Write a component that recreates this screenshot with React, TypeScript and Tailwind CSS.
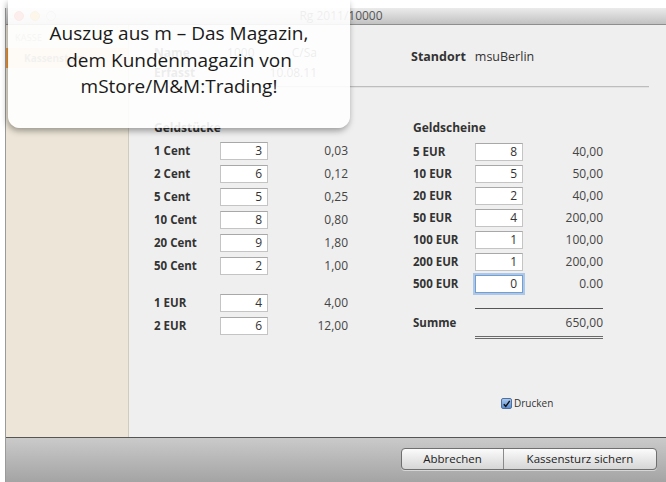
import React from 'react';

type Row = { label: string; count: string; sum: string; focus?: boolean };

const coins: Row[] = [
  { label: '1 Cent', count: '3', sum: '0,03' },
  { label: '2 Cent', count: '6', sum: '0,12' },
  { label: '5 Cent', count: '5', sum: '0,25' },
  { label: '10 Cent', count: '8', sum: '0,80' },
  { label: '20 Cent', count: '9', sum: '1,80' },
  { label: '50 Cent', count: '2', sum: '1,00' },
];

const euroCoins: Row[] = [
  { label: '1 EUR', count: '4', sum: '4,00' },
  { label: '2 EUR', count: '6', sum: '12,00' },
];

const notes: Row[] = [
  { label: '5 EUR', count: '8', sum: '40,00' },
  { label: '10 EUR', count: '5', sum: '50,00' },
  { label: '20 EUR', count: '2', sum: '40,00' },
  { label: '50 EUR', count: '4', sum: '200,00' },
  { label: '100 EUR', count: '1', sum: '100,00' },
  { label: '200 EUR', count: '1', sum: '200,00' },
  { label: '500 EUR', count: '0', sum: '0.00', focus: true },
];

function CountInput({ value, focus }: { value: string; focus?: boolean }) {
  return (
    <div
      className={
        focus
          ? 'h-[18px] w-[48px] bg-white border border-[#6f9fd6] shadow-[0_0_0_2px_rgba(120,165,220,0.55)] text-right pr-[5px] leading-[16px] text-[12px] text-[#333]'
          : 'h-[18px] w-[48px] bg-white border border-[#c4c4c4] border-t-[#a8a8a8] text-right pr-[5px] leading-[16px] text-[12px] text-[#333]'
      }
    >
      {value}
    </div>
  );
}

function MoneyRow({ row, labelWidth, height }: { row: Row; labelWidth: string; height: string }) {
  return (
    <div className={`flex items-center ${height}`}>
      <div className={`${labelWidth} text-[11.5px] font-bold text-[#333]`}>{row.label}</div>
      <CountInput value={row.count} focus={row.focus} />
      <div className="w-[80px] text-right text-[12px] text-[#444]">{row.sum}</div>
    </div>
  );
}

function TrafficLights() {
  return (
    <div className="flex items-center gap-[6px] pl-[8px]">
      <span className="h-[10px] w-[10px] rounded-full bg-[#e2574c] border border-[#c0392b]" />
      <span className="h-[10px] w-[10px] rounded-full bg-[#e9b33a] border border-[#c8922a]" />
      <span className="h-[10px] w-[10px] rounded-full bg-[#d8d8d8] border border-[#a9a9a9]" />
    </div>
  );
}

export default function App() {
  return (
    <div className="relative h-[482px] w-[666px] overflow-hidden bg-white pt-[8px] pl-[5px] font-['Open_Sans','Liberation_Sans',sans-serif] text-[11px]">
      <div className="flex h-[474px] flex-col border-l border-[#9a9a9a]">
        {/* title bar */}
        <div className="relative flex h-[17px] items-center bg-gradient-to-b from-[#ebebeb] to-[#c2c2c2] border-b border-[#8e8e8e]">
          <TrafficLights />
          <div className="flex-1 text-center text-[12px] leading-[16px] text-[#555] pr-[40px]">Rg 2011/10000</div>
        </div>

        <div className="flex flex-1">
          {/* sidebar */}
          <div className="w-[123px] bg-[#ede6d8] border-r border-[#d2cbbd]">
            <div className="pl-[9px] pt-[6px] h-[23px] text-[9px] tracking-wide text-[#9b9b9b]">KASSE</div>
            <div className="flex h-[20px] items-center border-l-[3px] border-[#ef9a3c] bg-[#f6cfa2] pl-[15px] text-[10px] font-bold text-[#7d7466]">
              Kassensturz
            </div>
          </div>

          {/* main form */}
          <div className="flex-1 bg-[#efefef] px-[12px]">
            <div className="flex pt-[18px] pl-[13px]">
              <div className="w-[257px] text-[12px]">
                <div className="flex h-[20px] w-[163px] items-center justify-between text-[#444]">
                  <span className="font-bold">Name</span>
                  <span>1000</span>
                  <span>C/Sa</span>
                </div>
                <div className="flex h-[20px] w-[163px] items-center justify-between text-[#444]">
                  <span className="font-bold">Erfasst</span>
                  <span>10.08.11</span>
                </div>
              </div>
              <div className="flex h-[28px] items-center gap-[9px] text-[12.5px] text-[#333]">
                <span className="font-bold">Standort</span>
                <span>msuBerlin</span>
              </div>
            </div>

            <div className="mt-[3px] h-[2px] w-[508px] border-t border-[#bdbdbd] bg-[#e2e2e2]" />

            <div className="flex pt-[28px] pl-[13px]">
              {/* coins */}
              <div className="w-[259px]">
                <div className="flex h-[23px] items-center text-[12px] font-bold text-[#333]">Geldstücke</div>
                {coins.map((r) => (
                  <MoneyRow key={r.label} row={r} labelWidth="w-[66px]" height="h-[23px]" />
                ))}
                <div className="mt-[14px]">
                  {euroCoins.map((r) => (
                    <MoneyRow key={r.label} row={r} labelWidth="w-[66px]" height="h-[23px]" />
                  ))}
                </div>
              </div>

              {/* notes */}
              <div>
                <div className="flex h-[23px] items-center text-[12px] font-bold text-[#333]">Geldscheine</div>
                <div className="mt-[2px]">
                  {notes.map((r) => (
                    <MoneyRow key={r.label} row={r} labelWidth="w-[62px]" height="h-[22px]" />
                  ))}
                </div>
                <div className="ml-[62px] mt-[13px] h-px w-[128px] bg-[#555]" />
                <div className="flex h-[27px] items-center">
                  <div className="w-[110px] text-[11.5px] font-bold text-[#333]">Summe</div>
                  <div className="w-[80px] text-right text-[12px] text-[#444]">650,00</div>
                </div>
                <div className="ml-[62px] h-[3px] w-[128px] border-y border-[#6a6a6a]" />

                <div className="mt-[57px] ml-[88px] flex items-center gap-[2px] text-[10px] text-[#333]">
                  <span className="flex h-[11px] w-[11px] items-center justify-center rounded-[2px] border border-[#4f6f9c] bg-gradient-to-b from-[#a9c8ee] to-[#5d8fd2]">
                    <svg viewBox="0 0 10 10" className="h-[10px] w-[10px]">
                      <path d="M2 5.2 L4.2 7.6 L8.6 1.6" fill="none" stroke="#111" strokeWidth="1.6" />
                    </svg>
                  </span>
                  <span>Drucken</span>
                </div>
              </div>
            </div>
          </div>
        </div>

        {/* bottom bar */}
        <div className="flex h-[45px] items-center justify-end border-t border-[#555] bg-gradient-to-b from-[#cacaca] to-[#a4a4a4] pr-[9px] pb-[2px]">
          <div className="flex h-[22px] overflow-hidden rounded-[4px] border border-[#6f6f6f] bg-gradient-to-b from-[#fbfbfb] to-[#d6d6d6] text-[11.5px] text-[#222] shadow-[0_1px_0_rgba(255,255,255,0.5)]">
            <div className="flex w-[102px] items-center justify-center border-r border-[#8a8a8a]">Abbrechen</div>
            <div className="flex w-[152px] items-center justify-center">Kassensturz sichern</div>
          </div>
        </div>
      </div>

      {/* info banner laid over the window */}
      <div className="absolute left-[8px] top-0 h-[128px] w-[342px] rounded-b-[12px] bg-white/[0.9] pt-[20px] text-center text-[19px] leading-[26.5px] text-[#1a1a1a] shadow-[-1px_3px_6px_rgba(0,0,0,0.35)]">
        <div>Auszug aus m – Das Magazin,</div>
        <div>dem Kundenmagazin von</div>
        <div>mStore/M&amp;M:Trading!</div>
      </div>
    </div>
  );
}
